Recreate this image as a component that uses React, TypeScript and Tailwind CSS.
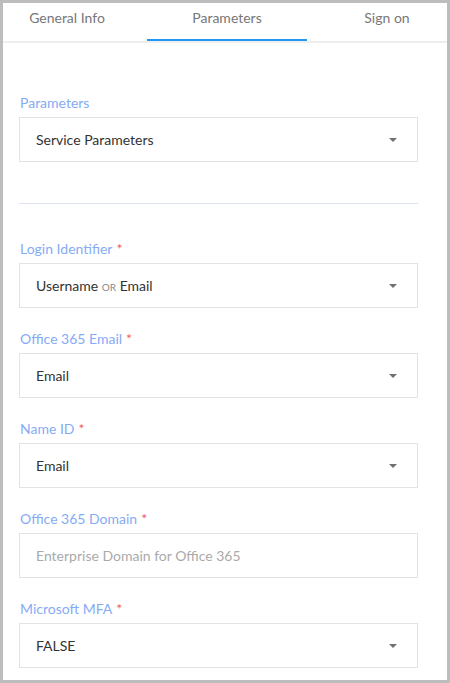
import React from 'react';

type Field = {
  label: string;
  required?: boolean;
  value?: React.ReactNode;
  placeholder?: string;
  select?: boolean;
};

const tabs = ['General Info', 'Parameters', 'Sign on'];

const fields: Field[] = [
  {
    label: 'Login Identifier',
    required: true,
    select: true,
    value: (
      <>
        Username <span className="text-[10px] uppercase text-[#888]">or</span> Email
      </>
    ),
  },
  { label: 'Office 365 Email', required: true, select: true, value: 'Email' },
  { label: 'Name ID', required: true, select: true, value: 'Email' },
  { label: 'Office 365 Domain', required: true, placeholder: 'Enterprise Domain for Office 365' },
  { label: 'Microsoft MFA', required: true, select: true, value: 'FALSE' },
];

const Caret = () => (
  <svg width="8" height="4" viewBox="0 0 8 4" className="shrink-0">
    <path d="M0 0h8L4 4z" fill="#707070" />
  </svg>
);

const FieldBox = ({ field }: { field: Field }) => (
  <div className="h-[45px] border border-[#e3e3e3] flex items-center justify-between pl-[16px] pr-[20px]">
    {field.placeholder ? (
      <span className="text-[#aaa]">{field.placeholder}</span>
    ) : (
      <span className="text-[#333]">{field.value}</span>
    )}
    {field.select && <Caret />}
  </div>
);

const FieldLabel = ({ field }: { field: Field }) => (
  <div className="h-5 leading-5 mb-[4px] pl-px text-[#86abf5]">
    {field.label}
    {field.required && <span className="text-[#f25b5b] ml-1">*</span>}
  </div>
);

export default function App() {
  return (
    <div
      className="w-[450px] h-[683px] border-[3px] border-[#bdbdbd] bg-white overflow-hidden text-[14px]"
      style={{ fontFamily: 'Lato, "Open Sans", sans-serif' }}
    >
      {/* tab strip, scrolled slightly left */}
      <div className="border-b-2 border-[#eeeeee] overflow-hidden">
        <div className="flex -ml-[16px]">
          {tabs.map((t, i) => (
            <div
              key={t}
              className={`w-[160px] shrink-0 h-[38px] pb-[8px] flex items-center justify-center text-[#777] border-b-2 ${
                i === 1 ? 'border-[#2196f3]' : 'border-transparent'
              }`}
            >
              {t}
            </div>
          ))}
        </div>
      </div>

      <div className="pt-[50px] pl-[16px] pr-[29px]">
        <FieldLabel field={{ label: 'Parameters' }} />
        <FieldBox field={{ label: 'Parameters', select: true, value: 'Service Parameters' }} />

        <div className="mt-[41px] mb-[35px] h-px bg-[#dde4ee]" />

        <div className="flex flex-col gap-[21px]">
          {fields.map((f) => (
            <div key={f.label}>
              <FieldLabel field={f} />
              <FieldBox field={f} />
            </div>
          ))}
        </div>
      </div>
    </div>
  );
}
